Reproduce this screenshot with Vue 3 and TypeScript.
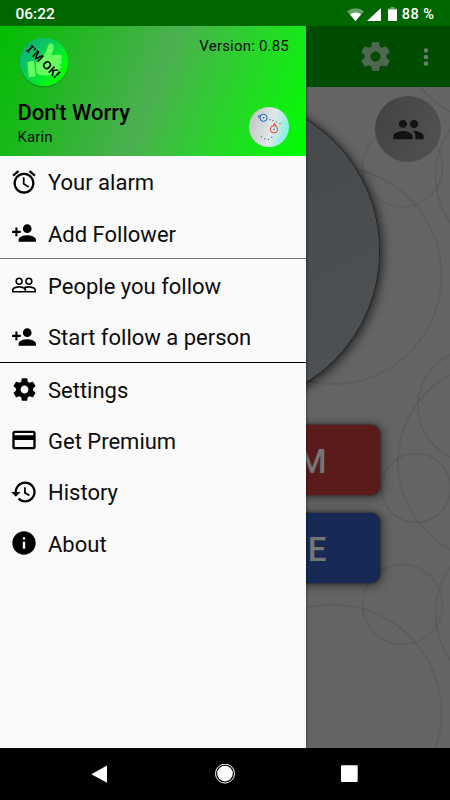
<script setup lang="ts">
type IconName = 'alarm' | 'personAdd' | 'people' | 'settings' | 'card' | 'history' | 'info'

interface MenuItem {
  label: string
  icon: IconName
}

const icons: Record<IconName, string> = {
  alarm:
    'M22 5.72l-4.6-3.86-1.29 1.53 4.6 3.86L22 5.72zM7.88 3.39L6.6 1.86 2 5.71l1.29 1.53 4.59-3.85zM12.5 8H11v6l4.75 2.85.75-1.23-4-2.37V8zM12 4c-4.97 0-9 4.03-9 9s4.02 9 9 9c4.97 0 9-4.03 9-9s-4.03-9-9-9zm0 16c-3.87 0-7-3.13-7-7s3.13-7 7-7 7 3.13 7 7-3.13 7-7 7z',
  personAdd:
    'M15 12c2.21 0 4-1.79 4-4s-1.79-4-4-4-4 1.79-4 4 1.79 4 4 4zm-9-2V7H4v3H1v2h3v3h2v-3h3v-2H6zm9 4c-2.67 0-8 1.34-8 4v2h16v-2c0-2.66-5.33-4-8-4z',
  people:
    'M16.5 13c-1.2 0-3.07.34-4.5 1-1.43-.67-3.3-1-4.5-1C5.33 13 1 14.08 1 16.25V19h22v-2.75c0-2.17-4.33-3.25-6.5-3.25zm-4 4.5h-10v-1.25c0-.54 2.56-1.75 5-1.75s5 1.21 5 1.75v1.25zm9 0H14v-1.25c0-.46-.2-.86-.52-1.22.88-.3 1.96-.53 3.02-.53 2.44 0 5 1.21 5 1.75v1.25zM7.5 12c1.93 0 3.5-1.57 3.5-3.5S9.43 5 7.5 5 4 6.57 4 8.5 5.57 12 7.5 12zm0-5.5c1.1 0 2 .9 2 2s-.9 2-2 2-2-.9-2-2 .9-2 2-2zm9 5.5c1.93 0 3.5-1.57 3.5-3.5S18.43 5 16.5 5 13 6.57 13 8.5s1.57 3.5 3.5 3.5zm0-5.5c1.1 0 2 .9 2 2s-.9 2-2 2-2-.9-2-2 .9-2 2-2z',
  settings:
    'M19.43 12.98c.04-.32.07-.64.07-.98s-.03-.66-.07-.98l2.11-1.65c.19-.15.24-.42.12-.64l-2-3.46c-.12-.22-.39-.3-.61-.22l-2.49 1c-.52-.4-1.08-.73-1.69-.98l-.38-2.65C14.46 2.18 14.25 2 14 2h-4c-.25 0-.46.18-.49.42l-.38 2.65c-.61.25-1.17.59-1.69.98l-2.49-1c-.23-.09-.49 0-.61.22l-2 3.46c-.13.22-.07.49.12.64l2.11 1.65c-.04.32-.07.65-.07.98s.03.66.07.98l-2.11 1.65c-.19.15-.24.42-.12.64l2 3.46c.12.22.39.3.61.22l2.49-1c.52.4 1.08.73 1.69.98l.38 2.65c.03.24.24.42.49.42h4c.25 0 .46-.18.49-.42l.38-2.65c.61-.25 1.17-.59 1.69-.98l2.49 1c.23.09.49 0 .61-.22l2-3.46c.12-.22.07-.49-.12-.64l-2.11-1.65zM12 15.5c-1.93 0-3.5-1.57-3.5-3.5s1.57-3.5 3.5-3.5 3.5 1.57 3.5 3.5-1.57 3.5-3.5 3.5z',
  card:
    'M20 4H4c-1.11 0-1.99.89-1.99 2L2 18c0 1.11.89 2 2 2h16c1.11 0 2-.89 2-2V6c0-1.11-.89-2-2-2zm0 14H4v-6h16v6zm0-10H4V6h16v2z',
  history:
    'M13 3c-4.97 0-9 4.03-9 9H1l3.89 3.89.07.14L9 12H6c0-3.87 3.13-7 7-7s7 3.13 7 7-3.13 7-7 7c-1.93 0-3.68-.79-4.94-2.06l-1.42 1.42C8.27 19.99 10.51 21 13 21c4.97 0 9-4.03 9-9s-4.03-9-9-9zm-1 5v5l4.28 2.54.72-1.21-3.5-2.08V8H12z',
  info: 'M12 2C6.48 2 2 6.48 2 12s4.48 10 10 10 10-4.48 10-10S17.52 2 12 2zm1 15h-2v-6h2v6zm0-8h-2V7h2v2z',
}

const groups: MenuItem[][] = [
  [
    { label: 'Your alarm', icon: 'alarm' },
    { label: 'Add Follower', icon: 'personAdd' },
  ],
  [
    { label: 'People you follow', icon: 'people' },
    { label: 'Start follow a person', icon: 'personAdd' },
  ],
  [
    { label: 'Settings', icon: 'settings' },
    { label: 'Get Premium', icon: 'card' },
    { label: 'History', icon: 'history' },
    { label: 'About', icon: 'info' },
  ],
]

const rings = [
  { x: 402.5, y: 80, r: 40 },
  { x: 402.5, y: 517.5, r: 40 },
  { x: 333, y: 188.5, r: 108.5 },
  { x: 333, y: 626, r: 108.5 },
  { x: 515.5, y: 89, r: 80 },
  { x: 515.5, y: 526.5, r: 80 },
  { x: 497, y: -62.5, r: 99 },
  { x: 497, y: 375, r: 99 },
  { x: 474.6, y: 319, r: 56.6 },
  { x: 416, y: 401, r: 34.5 },
]
</script>

<template>
  <div class="phone">
    <header class="status">
      <span class="clock">06:22</span>
      <div class="indicators">
        <svg class="wifi" viewBox="0 0 16 12">
          <path d="M0 3Q8-2.8 16 3L8 12.500z" fill="#fff" fill-opacity=".4" />
          <path d="M2.700 5.800Q8 2.200 13.300 5.800L8 12z" fill="#fff" />
        </svg>
        <svg class="signal" viewBox="0 0 14 13"><path d="M14 0v13H0z" fill="#fff" /></svg>
        <svg class="battery" viewBox="0 0 9 14">
          <path d="M0 1.500h2.500V0h4v1.500H9V3H0z" fill="#fff" fill-opacity=".4" />
          <path d="M0 2.500h9v10.700q0 .8-.8.800H.8q-.8 0-.8-.8z" fill="#fff" />
        </svg>
        <span class="percent">88 %</span>
      </div>
    </header>

    <div class="stage">
      <section class="page">
        <div class="toolbar">
          <svg class="gear" viewBox="0 0 24 24"><path :d="icons.settings" /></svg>
          <svg class="dots" viewBox="0 0 6 20">
            <circle cx="3" cy="3.500" r="2.300" /><circle cx="3" cy="10" r="2.300" /><circle cx="3" cy="16.500" r="2.300" />
          </svg>
        </div>
        <main class="content">
          <button class="ok-button" aria-label="OK"></button>
          <button class="action red">M</button>
          <button class="action blue">E</button>
          <button class="followers" aria-label="Followers">
            <svg viewBox="0 0 24 24">
              <path d="M16 11c1.660 0 2.990-1.340 2.990-3S17.660 5 16 5c-1.660 0-3 1.340-3 3s1.340 3 3 3zm-8 0c1.660 0 2.990-1.340 2.990-3S9.660 5 8 5C6.340 5 5 6.340 5 8s1.340 3 3 3zm0 2c-2.330 0-7 1.170-7 3.500V19h14v-2.500c0-2.330-4.670-3.500-7-3.500zm8 0c-.29 0-.62.02-.97.05 1.160.84 1.970 1.970 1.970 3.450V19h6v-2.500c0-2.330-4.670-3.500-7-3.500z" />
            </svg>
          </button>
          <svg class="rings" viewBox="0 0 450 661">
            <circle v-for="(ring, i) in rings" :key="i" :cx="ring.x" :cy="ring.y" :r="ring.r" />
          </svg>
        </main>
      </section>

      <aside class="drawer">
        <div class="head">
          <div class="head-row top">
            <svg class="logo" viewBox="0 0 50 50">
              <defs>
                <linearGradient id="logoFill" x1="0" y1="0.200" x2="0.900" y2="0.900">
                  <stop offset="0" stop-color="#0cad80" />
                  <stop offset=".5" stop-color="#08d84c" />
                  <stop offset=".85" stop-color="#00ff08" />
                </linearGradient>
              </defs>
              <circle cx="25" cy="25" r="24.300" fill="url(#logoFill)" />
              <path d="M8.500 25l6.500-1.200 1.500 15.500-6.800 1.200zM17 25c4-2 6.500-4 8.500-7.500 1.800-3 2.800-5.500 3.300-8 .8-4.500 5.700-4.500 6 0 .2 3.300-1.500 6-2.600 9l7.300-1c4-.3 4.500 3.800 2 5 2.500 1 2 4.500-.5 5 2 1.500 1 4.500-1.200 5 1.500 2-.3 4.500-2.600 4.600-6.500 1.500-13 2.300-17.500.4L17.500 36z" fill="#65ff5e" />
              <text class="logo-text" x="0" y="0" text-anchor="middle" textLength="41" lengthAdjust="spacingAndGlyphs" transform="translate(21.500 27.500) rotate(44)">I'M OK!</text>
            </svg>
            <span class="version">Version: 0.85</span>
          </div>
          <div class="head-row bottom">
            <div class="who">
              <h1>Don't Worry</h1>
              <p>Karin</p>
            </div>
            <svg class="map" viewBox="0 0 40 40">
              <defs>
                <linearGradient id="mapFill" x1="0" y1="0.300" x2="1" y2="0.550">
                  <stop offset="0" stop-color="#c4c4c4" />
                  <stop offset=".6" stop-color="#dfe9e9" />
                  <stop offset="1" stop-color="#80eee4" />
                </linearGradient>
              </defs>
              <circle cx="20" cy="20" r="20" fill="url(#mapFill)" />
              <g fill="none" stroke-width="1">
                <path d="M11.500 8.800L9 9l2 2.500" stroke="#1f62bd" />
                <circle cx="14.500" cy="10.800" r="3.600" stroke="#1f62bd" />
                <path d="M24.500 19l1-3 1.500 3" stroke="#f33" />
                <circle cx="25" cy="22.300" r="3.700" stroke="#f33" />
              </g>
              <g fill="#344">
                <circle cx="14.700" cy="10.800" r=".7" /><circle cx="25" cy="22.300" r=".8" />
                <circle cx="21" cy="12.700" r=".6" /><circle cx="24" cy="13.700" r=".6" />
                <circle cx="27.500" cy="14.800" r=".6" /><circle cx="31" cy="16.300" r=".6" />
                <circle cx="12.500" cy="29.800" r=".6" /><circle cx="15.700" cy="31.800" r=".6" />
                <circle cx="19.500" cy="32.500" r=".6" /><circle cx="22.800" cy="30.200" r=".6" />
              </g>
            </svg>
          </div>
        </div>
        <nav>
          <ul v-for="(group, g) in groups" :key="g">
            <li v-for="item in group" :key="item.label">
              <svg viewBox="0 0 24 24" :class="item.icon"><path :d="icons[item.icon]" /></svg>
              <span>{{ item.label }}</span>
            </li>
          </ul>
        </nav>
      </aside>
    </div>

    <footer class="system">
      <svg viewBox="0 0 20 20"><path d="M16 1.500v17.300L.3 10.200z" /></svg>
      <svg viewBox="0 0 20 20">
        <circle cx="10" cy="9.600" r="9.500" fill="none" stroke="#fff" stroke-width="1" />
        <circle cx="10" cy="9.600" r="7.800" />
      </svg>
      <svg viewBox="0 0 20 20"><rect x="2" y="1.300" width="16.700" height="16.700" rx="1" /></svg>
    </footer>
  </div>
</template>

<style>
body {
  margin: 0;
  background: #000;
}
</style>

<style scoped>
.phone {
  width: 450px;
  height: 800px;
  display: grid;
  grid-template-rows: 26px 722px 52px;
  font-family: Roboto, sans-serif;
  overflow: hidden;
}
.status {
  background: #006600;
  color: #fff;
  display: flex;
  align-items: center;
  justify-content: space-between;
  padding: 2px 15.500px 0;
  font-weight: 500;
}
.clock {
  font-size: 15.500px;
}
.indicators {
  display: flex;
  align-items: center;
}
.percent {
  font-size: 14.500px;
  letter-spacing: 0.5px;
}
.wifi {
  width: 17px;
  height: 13px;
  margin-right: 3px;
}
.signal {
  width: 14px;
  height: 13px;
  margin-right: 7px;
}
.battery {
  width: 9px;
  height: 14px;
  margin-right: 5px;
}
.stage {
  position: relative;
  overflow: hidden;
}
.page {
  height: 100%;
  display: grid;
  grid-template-rows: 61px 1fr;
}
.toolbar {
  background: #004c00;
  display: flex;
  align-items: center;
  justify-content: flex-end;
  gap: 30px;
  padding-right: 21px;
}
.gear {
  width: 35px;
  height: 35px;
  fill: #4f664f;
}
.dots {
  width: 6px;
  height: 20px;
  fill: #6a7f6a;
}
.content {
  position: relative;
  overflow: hidden;
  background: #646464;
  display: flex;
  flex-direction: column;
  align-items: center;
  padding-top: 10px;
}
.rings {
  position: absolute;
  inset: 0;
  width: 450px;
  height: 661px;
  fill: none;
  stroke: rgba(70, 70, 70, 0.26);
  stroke-width: 1.600;
  pointer-events: none;
  z-index: 0;
}
.ok-button {
  position: relative;
  z-index: 1;
  border: 0;
  flex: none;
  width: 308px;
  height: 308px;
  border-radius: 50%;
  background: linear-gradient(150deg, #45484a, #494c4e 50%, #4d5255);
  box-shadow: 0 0 2px 1px rgba(20, 20, 20, 0.7), 2px 2px 8px 3px rgba(20, 20, 20, 0.6);
}
.action {
  position: relative;
  z-index: 1;
  flex: none;
  width: 310px;
  height: 70px;
  border: 0;
  border-radius: 9px;
  padding: 3px 53.500px 0 0;
  text-align: right;
  color: #757575;
  font: 500 33px Roboto, sans-serif;
  box-shadow: 0 0 2px 1px rgba(30, 30, 30, 0.5), 1px 1px 8px 2px rgba(20, 20, 20, 0.5);
}
.red {
  margin-top: 20px;
  background: #5b1b1b;
}
.blue {
  margin-top: 18px;
  background: #162a55;
}
.followers {
  position: absolute;
  right: 9px;
  top: 9px;
  width: 66px;
  height: 66px;
  border: 0;
  padding: 0;
  border-radius: 50%;
  background: linear-gradient(110deg, #424242, #525252);
  display: grid;
  place-items: center;
}
.followers svg {
  width: 33px;
  height: 33px;
  fill: #121212;
}
.drawer {
  position: absolute;
  left: 0;
  top: 0;
  z-index: 2;
  width: 306px;
  height: 100%;
  background: #fafafa;
  box-shadow: 0 0 3px rgba(0, 0, 0, 0.6);
  color: #0c0c0c;
}
.head {
  height: 129.500px;
  box-sizing: border-box;
  padding: 11px 17px 9px 17.500px;
  display: flex;
  flex-direction: column;
  justify-content: space-between;
  background: linear-gradient(112deg, #00be00 0%, #4caf50 50%, #00ff00 100%);
}
.head-row {
  display: flex;
  justify-content: space-between;
}
.logo {
  width: 50px;
  height: 50px;
  margin: 0 0 0 1px;
  filter: drop-shadow(0 1px 0.5px rgba(0, 60, 0, 0.4));
}
.logo-text {
  font: 700 11.500px "Noto Sans", sans-serif;
}
.version {
  font-size: 15px;
  line-height: 18px;
  letter-spacing: 0.2px;
}
.bottom {
  align-items: flex-end;
}
.who {
  margin-bottom: -1px;
}
.who h1 {
  margin: 0;
  font-size: 22px;
  line-height: 28px;
  font-weight: 500;
  color: #000;
}
.who p {
  margin: 0;
  font-size: 15px;
  line-height: 21px;
  letter-spacing: 0.1px;
}
.map {
  width: 40px;
  height: 40px;
}
nav ul {
  list-style: none;
  margin: 0;
  padding: 0;
}
nav ul + ul {
  border-top: 1.200px solid #000;
}
nav ul:nth-child(2) {
  border-top-color: #777;
}
nav li {
  height: 51.350px;
  display: flex;
  align-items: center;
  gap: 10px;
  padding: 1px 0 0 10px;
  box-sizing: border-box;
  font-size: 22px;
}
nav li span {
  padding-top: 2px;
}
nav li svg {
  width: 28px;
  height: 28px;
  flex: none;
  fill: #000;
}
nav li svg.people,
nav li svg.personAdd {
  width: 26px;
  height: 26px;
  margin: 0 1px;
}
nav li svg.settings {
  width: 27px;
  height: 27px;
  margin: 0 0.500px;
}
.system {
  background: #000;
  display: flex;
  justify-content: center;
  align-items: center;
  gap: 104px;
}
.system svg {
  width: 20px;
  height: 20px;
  fill: #fff;
}
</style>
